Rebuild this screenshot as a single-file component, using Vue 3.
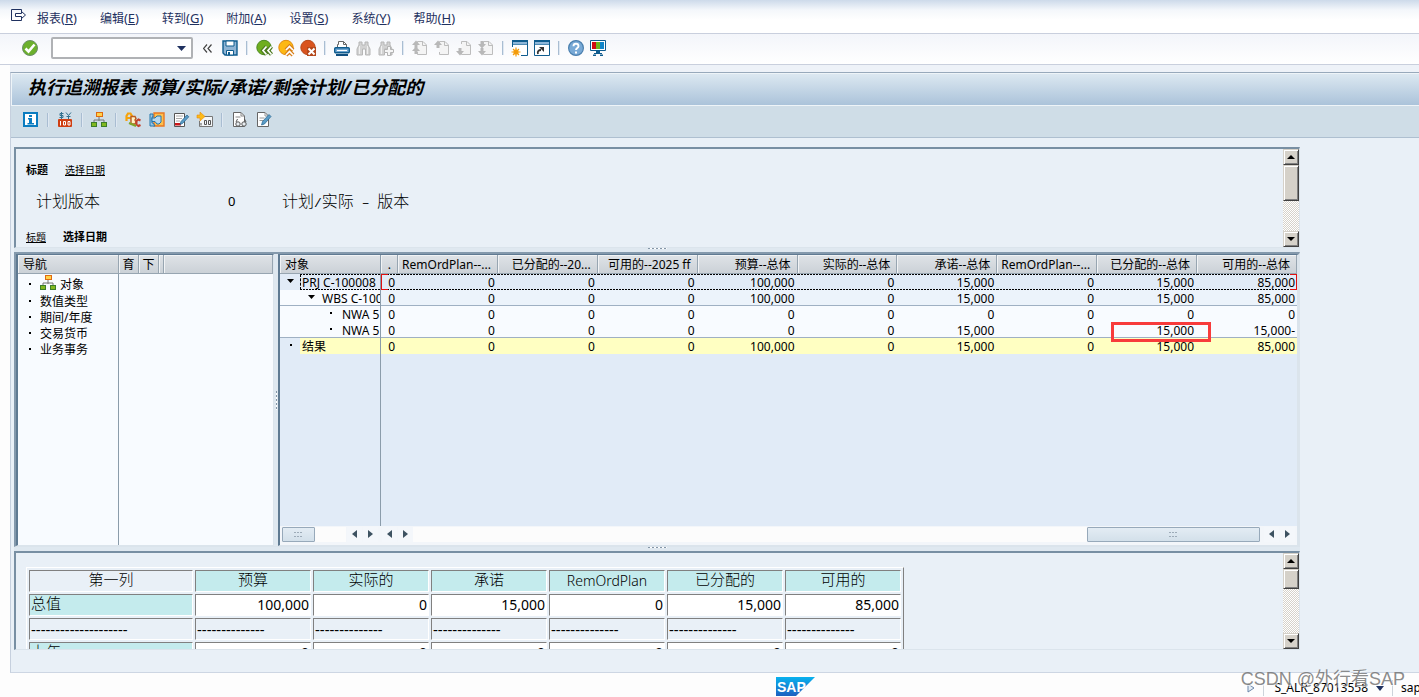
<script setup>
import { ref } from 'vue'

const menus = [
  ['报表', 'R'], ['编辑', 'E'], ['转到', 'G'], ['附加', 'A'],
  ['设置', 'S'], ['系统', 'Y'], ['帮助', 'H'],
]

const page = '<path d="M5.500 4V1.500H11L14.500 5V14.500H5.500V12" fill="#f4f4f4" stroke="#bdbdbd"/><path d="M10.500 1V5.500H15" fill="none" stroke="#bdbdbd"/>'
const binoculars = '<path d="M3 2h3v3h3V2h3v3l2 4v6H9.500V9h-3v6H1V9l2-4z" fill="#d2d2d2" stroke="#b6b6b6"/><path d="M3.500 6v8M11.500 6v8" stroke="#f0f0f0"/>'
const upArrow = '<path d="M4 0.500L8 5H5.500V8H2.500V5H0z" fill="#b8b8b8"/>'
const hierarchy = '<path d="M8 5v4M3 10V8h10v2" fill="none" stroke="#777"/><rect x="5.500" y=".5" width="6" height="4" fill="#ffd24a" stroke="#e06a10"/><rect x=".5" y="10.500" width="5" height="4" fill="#82b81f" stroke="#3c7d2a"/><rect x="10.500" y="10.500" width="5" height="4" fill="#82b81f" stroke="#3c7d2a"/>'

const icons = {
  ok: '<circle cx="8" cy="8" r="7.500" fill="#6cb02c" stroke="#6b8f68"/><path d="M3.500 8.500l3 3L12.500 4.500" fill="none" stroke="#fff" stroke-width="2.600"/>',
  save: '<path d="M1 1h14v14H3l-2-2z" fill="#8fb4d4" stroke="#0f5c8e" stroke-width="1.400"/><path d="M4 1h8v5H4z" fill="#fff" stroke="#0f5c8e"/><path d="M4.500 10.500h7V15h-7z" fill="#fff" stroke="#0f5c8e"/><path d="M6 12h2v3H6z" fill="#0f5c8e"/>',
  back: '<circle cx="8" cy="7.500" r="7.200" fill="#6fae1f" stroke="#4c8a22"/><path d="M10.500 6.500L7 10.500l3.500 4M15.500 6.500l-3.500 4 3.500 4" fill="none" stroke="#4d7a20" stroke-width="4"/><path d="M10.500 6.500L7 10.500l3.500 4M15.500 6.500l-3.500 4 3.500 4" fill="none" stroke="#fff" stroke-width="1.700"/>',
  exit: '<circle cx="8" cy="7.500" r="7.200" fill="#fdb813" stroke="#e08a10"/><path d="M8 10l3.500-3.500L15 10M8 15l3.500-3.500L15 15" fill="none" stroke="#d8801a" stroke-width="4"/><path d="M8 10l3.500-3.500L15 10M8 15l3.500-3.500L15 15" fill="none" stroke="#fff" stroke-width="1.700"/>',
  cancel: '<circle cx="8" cy="7.500" r="7.200" fill="#d9531e" stroke="#b6481a"/><path d="M7 7h9v9H7z" fill="#b4481b"/><path d="M8.500 8.500l6 6M14.500 8.500l-6 6" stroke="#fff" stroke-width="2"/>',
  print: '<path d="M3.500 8V4.500h1V1.500H9.500L12.500 4.500V8" fill="#fff" stroke="#666"/><path d="M9.500 1.500v3h3" fill="none" stroke="#666"/><rect x=".7" y="7.700" width="14.600" height="5" rx="1" fill="#6fa5d0" stroke="#0f5c8e" stroke-width="1.400"/><path d="M3 10.500h10" stroke="#fff"/><path d="M2 15h12" stroke="#0f4f80" stroke-width="2"/>',
  find: binoculars,
  findNext: binoculars + '<path d="M9.500 6.500h3v3h3v3h-3v3h-3v-3h-3v-3h3z" fill="#f5f5f5" stroke="#b4b4b4"/>',
  first: page + upArrow + '<path d="M4 6.500L8 11H5.500V14H2.500V11H0z" fill="#b8b8b8"/>',
  prev: page + upArrow,
  next: page + '<path d="M4 15.500L8 11H5.500V8H2.500v3H0z" fill="#b8b8b8"/>',
  last: page + '<path d="M4 8.500L8 4H5.500V1H2.500V4H0z" fill="#b8b8b8"/><path d="M4 15.500L8 11H5.500V8H2.500v3H0z" fill="#b8b8b8"/>',
  session: '<path d="M.5.500h15v15H.5z" fill="#fff" stroke="#0f5c8e"/><path d="M0 0h16v5H0z" fill="#0f5c8e"/><path d="M1 2h14v2.500H1z" fill="#8db6d8"/><path d="M0 7h9v9H0z" fill="#fff"/><circle cx="4" cy="12" r="2.600" fill="#fbb016"/><path d="M4 7.500v9M-.5 12h9M1 9l6 6M7 9l-6 6" stroke="#f39a0b" stroke-width="1.200"/>',
  shortcut: '<path d="M.5.500h15v15H.5z" fill="#fff" stroke="#0f5c8e"/><path d="M0 0h16v5H0z" fill="#0f5c8e"/><path d="M1 2h14v2.500H1z" fill="#8db6d8"/><path d="M4 14c-1-3 1-4 3-4" fill="none" stroke="#333" stroke-width="1.800"/><path d="M5 7h5v5z" fill="#333"/>',
  help: '<circle cx="8" cy="8" r="7.400" fill="#78a9d6" stroke="#4a7fae" stroke-width="1.200"/><path d="M5.500 6.200c0-3.200 5-3.200 5 0 0 1.800-2.500 1.800-2.500 3.800" fill="none" stroke="#fff" stroke-width="1.900"/><path d="M7 11.500h2v2H7z" fill="#fff"/>',
  monitor: '<path d="M.5.500h15v10H.5z" fill="#fff" stroke="#0f5c8e"/><path d="M2 2h4v7H2z" fill="#d20a11"/><path d="M6 2h4v7H6z" fill="#6db51d"/><path d="M10 2h4v7h-4z" fill="#1185c9"/><path d="M6 11h4v2H6zM4 13h8v1H4zM3 14.500h3v1.500H3zM10 14.500h3v1.500h-3z" fill="#0f5c8e"/>',
  info: '<path d="M1 1h13v13H1z" fill="#fff" stroke="#0a7cc0" stroke-width="2"/><path d="M6 3h3v2H6zM5 6h4v5h2v1.500H4.500V11H6V7.500H5z" fill="#0a7cc0"/>',
  currency: '<path d="M6.500 1.500H3v2h3v2H2.500M4.500 0v7M9 .5l2.500 3 2.500-3M11.500 3.500V7M9.500 4.500h4" fill="none" stroke="#33708f"/><rect x="1" y="7" width="14" height="8" rx="1" fill="#cf3f12"/><path d="M3.500 9v4.500M6.500 9.500h2v3.500h-2zM11 9.500h2v3.500h-2z" fill="none" stroke="#fff"/>',
  hierarchy,
  abc: '<path d="M1.500 9V4L3 1.500h2.500L7 4v5M1.500 6H7" fill="none" stroke="#f5a30c" stroke-width="2.200"/><path d="M6 4.500h4l1 2-1 1.500 1 2-1 2H6z" fill="#fff1c4" stroke="#b95a20" stroke-width="1.400"/><path d="M15.500 8.500l-2-1-2 1.500v3.500l2 1.500 2-1" fill="none" stroke="#c2402a" stroke-width="2"/><path d="M4 11l7 3" stroke="#81a527" stroke-width="2"/>',
  settings: '<path d="M5 1h10v13H5z" fill="#fdbf4c" stroke="#e87722" stroke-width="1.400"/><path d="M1 2h3v3H3v6h1l2 3H1z" fill="#9cc5e4" stroke="#2376ab"/><path d="M3 6h3l2-2h4v6l-2 2H8L6 9.500H3z" fill="#b9d8ed" stroke="#2376ab"/>',
  editList: '<path d="M1.500 1.500h10v13h-10z" fill="#fff" stroke="#555"/><path d="M3 4h7M3 6.500h6M3 9h4" stroke="#aaa"/><path d="M2 11h6v2.500H2z" fill="#cc1719"/><path d="M7 12.500l1-3 6-6.500 1.800 1.800L9.500 11.500z" fill="#5b9cc6" stroke="#21638f" stroke-width=".7"/>',
  decimals: '<path d="M7 4.500h8.500v10H2.500V9" fill="#f3f6f8" stroke="#777"/><path d="M4 11v2.500M7.500 8.500h2v4h-2zM11.500 8.500h2v4h-2z" fill="none" stroke="#555"/><path d="M0 3h3V0l5 4.500L3 9V6H0z" fill="#fdbb18" stroke="#e88b0e" stroke-width=".6"/>',
  display: '<path d="M2.500.5H10L13.500 4v10.500h-11z" fill="#fff" stroke="#666"/><path d="M10 .5V4h3.500M4.500 5h5" fill="none" stroke="#888"/><path d="M5 10l1.500-3M15 10l-1.500-3" stroke="#555"/><circle cx="7" cy="12" r="2.200" fill="#e8edf1" stroke="#555"/><circle cx="13" cy="12" r="2.200" fill="#e8edf1" stroke="#555"/>',
  change: '<path d="M2.500.5H10L13.500 4v10.500h-11z" fill="#fff" stroke="#666"/><path d="M10 .5V4h3.500M4.500 6h5M4.500 8.500h4" fill="none" stroke="#999"/><path d="M6.500 13l1-3.500L14 2.500l2 2-6.500 7.500z" fill="#5b9cc6" stroke="#21638f" stroke-width=".7"/>',
}

const mainTools = [
  ['save', '保存'], null, ['back', '返回'], ['exit', '退出'], ['cancel', '取消'], null,
  ['print', '打印'], ['find', '查找'], ['findNext', '查找下一个'], null,
  ['first', '第一页'], ['prev', '上一页'], ['next', '下一页'], ['last', '最后一页'], null,
  ['session', '新会话'], ['shortcut', '快捷方式'], null, ['help', '帮助'], ['monitor', '布局'],
]
const appTools = [
  ['info', '信息'], null, ['currency', '货币'], null, ['hierarchy', '层次'], null,
  ['abc', '文本'], ['settings', '设置'], ['editList', '编辑列表'], ['decimals', '小数位'], null,
  ['display', '显示'], ['change', '更改'],
]

const navItems = ['数值类型', '期间/年度', '交易货币', '业务事务']

const headers = [
  '.', 'RemOrdPlan--...', '已分配的--20...', '可用的--2025 ff', '预算--总体', '实际的--总体',
  '承诺--总体', 'RemOrdPlan--...', '已分配的--总体', '可用的--总体',
]
const rows = [
  { kind: 'active', level: 0, open: true, name: 'PRJ C-100008', v: ['0', '0', '0', '0', '100,000', '0', '15,000', '0', '15,000', '85,000'] },
  { kind: 'sub', level: 1, open: true, name: 'WBS C-100', v: ['0', '0', '0', '0', '100,000', '0', '15,000', '0', '15,000', '85,000'] },
  { kind: 'leaf', level: 2, name: 'NWA 5', v: ['0', '0', '0', '0', '0', '0', '0', '0', '0', '0'] },
  { kind: 'leaf last', level: 2, name: 'NWA 5', mark: 8, v: ['0', '0', '0', '0', '0', '0', '15,000', '0', '15,000', '15,000-'] },
  { kind: 'total', level: 0, name: '结果', v: ['0', '0', '0', '0', '100,000', '0', '15,000', '0', '15,000', '85,000'] },
]

const sumHeads = ['预算', '实际的', '承诺', 'RemOrdPlan', '已分配的', '可用的']
const totals = ['100,000', '0', '15,000', '0', '15,000', '85,000']
const command = ref('')
</script>

<template>
  <div class="window">
    <nav class="menubar">
      <button class="sysmenu" aria-label="系统菜单">
        <svg width="16" height="14" viewBox="0 0 16 14"><path d="M10.500 3V.5H.5v11h10V9" fill="none" stroke="#1f3160" /><path d="M4.500 4.500h6V2.500L14.500 6l-4 3.500V7.500h-6z" fill="#fff" stroke="#1f3160" /></svg>
      </button>
      <button v-for="m in menus" :key="m[1]" class="menu">{{ m[0] }}<span>(<u>{{ m[1] }}</u>)</span></button>
    </nav>

    <div class="toolbar">
      <button class="tool" aria-label="回车"><svg width="16" height="16" viewBox="0 0 16 16" v-html="icons.ok" /></button>
      <div class="command">
        <input v-model="command" aria-label="命令" />
        <button aria-label="历史"><svg width="9" height="5" viewBox="0 0 9 5"><path d="M0 0h9L4.500 5z" fill="#1f3160" /></svg></button>
      </div>
      <button class="collapse" aria-label="收起"><svg width="9" height="9" viewBox="0 0 9 9"><path d="M4 .5l-3.500 4 3.500 4M8.500.5L5 4.500l3.500 4" fill="none" stroke="#444" stroke-width="1.200" /></svg></button>
      <template v-for="(t, i) in mainTools" :key="i">
        <button v-if="t" class="tool" :aria-label="t[1]"><svg width="16" height="16" viewBox="0 0 16 16" v-html="icons[t[0]]" /></button>
        <i v-else class="sep roomy" />
      </template>
    </div>

    <main class="frame">
      <h1>执行追溯报表 预算/实际/承诺/剩余计划/已分配的</h1>
      <div class="apptools">
        <template v-for="(t, i) in appTools" :key="i">
          <button v-if="t" class="tool" :aria-label="t[1]"><svg width="16" height="16" viewBox="0 0 16 16" v-html="icons[t[0]]" /></button>
          <i v-else class="sep" />
        </template>
      </div>

      <div class="workspace">
        <section class="pane head-pane">
          <div class="scroll">
            <p class="links"><b>标题</b><a href="#date">选择日期</a></p>
            <p class="version"><span class="v-name">计划版本</span><span class="v-num">0</span><span>计划<span class="mono">/</span>实际<span class="mono">&nbsp;–&nbsp;</span>版本</span></p>
            <p class="links"><a href="#title">标题</a><b>选择日期</b></p>
          </div>
          <div class="vbar">
            <button aria-label="向上"><svg width="8" height="4" viewBox="0 0 8 4"><path d="M0 4h8L4 0z" /></svg></button>
            <span class="vthumb tall" />
            <button class="end" aria-label="向下"><svg width="8" height="4" viewBox="0 0 8 4"><path d="M0 0h8L4 4z" /></svg></button>
          </div>
        </section>

        <div class="hsplit"><i /></div>

        <section class="middle">
          <div class="navpane">
            <div class="navhead"><span class="c-nav">导航</span><span class="c-btn">育</span><span class="c-btn">下</span><span class="c-gap" /><span class="c-rest" /></div>
            <ul>
              <li class="with-icon"><i class="dot" /><svg width="16" height="16" viewBox="0 0 16 16" v-html="icons.hierarchy" />对象</li>
              <li v-for="n in navItems" :key="n"><i class="dot" />{{ n }}</li>
            </ul>
          </div>
          <div class="vsplit"><i /></div>
          <div class="datapane">
            <div class="gridwrap">
              <table class="grid">
                <colgroup><col class="w-name" /><col class="w-tiny" /><col v-for="n in 9" :key="n" /></colgroup>
                <thead>
                  <tr><th class="name">对象</th><th v-for="(h, i) in headers" :key="i">{{ h }}</th></tr>
                </thead>
                <tbody>
                  <tr v-for="(r, i) in rows" :key="i" :class="r.kind">
                    <td class="name"><div class="tree" :class="'l' + r.level">
                      <span class="knob"><svg v-if="r.open" width="7" height="4" viewBox="0 0 7 4"><path d="M0 0h7L3.500 4z" /></svg><i v-else class="dot" /></span><span class="label">{{ r.name }}</span>
                    </div></td>
                    <td v-for="(v, j) in r.v" :key="j">{{ v }}<i v-if="r.mark === j" class="mark" /></td>
                  </tr>
                </tbody>
              </table>
            </div>
            <div class="hbars">
              <div class="hbar first"><span class="hthumb small"><i class="grip" /></span><span class="space" />
                <button aria-label="左"><svg width="5" height="8" viewBox="0 0 5 8"><path d="M5 0v8L0 4z" /></svg></button><button aria-label="右"><svg width="5" height="8" viewBox="0 0 5 8"><path d="M0 0v8l5-4z" /></svg></button>
              </div>
              <div class="hbar rest">
                <button aria-label="左"><svg width="5" height="8" viewBox="0 0 5 8"><path d="M5 0v8L0 4z" /></svg></button><button aria-label="右"><svg width="5" height="8" viewBox="0 0 5 8"><path d="M0 0v8l5-4z" /></svg></button>
                <span class="space" /><span class="hthumb wide"><i class="grip" /></span>
                <button class="gapped" aria-label="左"><svg width="5" height="8" viewBox="0 0 5 8"><path d="M5 0v8L0 4z" /></svg></button><button aria-label="右"><svg width="5" height="8" viewBox="0 0 5 8"><path d="M0 0v8l5-4z" /></svg></button>
              </div>
            </div>
          </div>
        </section>

        <div class="hsplit"><i /></div>

        <section class="pane sum-pane">
          <div class="scroll">
            <table class="sum">
              <tbody>
                <tr><th class="plain first">第一列</th><th v-for="h in sumHeads" :key="h" :class="{ latin: h === 'RemOrdPlan' }">{{ h }}</th></tr>
                <tr><th class="left">总值</th><td v-for="(t, i) in totals" :key="i">{{ t }}</td></tr>
                <tr class="rule"><td>--------------------</td><td v-for="n in 6" :key="n">--------------</td></tr>
                <tr><th class="left">上年</th><td v-for="n in 6" :key="n">0</td></tr>
              </tbody>
            </table>
          </div>
          <div class="vbar">
            <button aria-label="向上"><svg width="8" height="4" viewBox="0 0 8 4"><path d="M0 4h8L4 0z" /></svg></button>
            <span class="vthumb" />
            <button class="end" aria-label="向下"><svg width="8" height="4" viewBox="0 0 8 4"><path d="M0 0h8L4 4z" /></svg></button>
          </div>
        </section>
      </div>
    </main>

    <footer class="status">
      <svg class="logo" width="40" height="20" viewBox="0 0 40 20">
        <defs><linearGradient id="sap" x2="0" y2="1"><stop stop-color="#09b2ee" /><stop offset="1" stop-color="#1d60c0" /></linearGradient></defs>
        <path d="M0 0h39L20 19H0z" fill="url(#sap)" />
        <text x="1" y="15" font-size="14" font-weight="700" fill="#fff" font-family="Liberation Sans, sans-serif">SAP</text>
      </svg>
      <div class="state">
        <svg width="8" height="10" viewBox="0 0 8 10"><path d="M1 1l6 4-6 4z" fill="#e6eef6" stroke="#6b87ab" /></svg>
        <i class="tick" />
        <span class="tcode">S_ALR_87013558</span>
        <svg width="8" height="5" viewBox="0 0 8 5"><path d="M0 0h8L4 5z" fill="#1f3160" /></svg>
        <i class="tick" />
        <span class="client">sap</span>
      </div>
      <span class="watermark">CSDN @外行看SAP</span>
    </footer>
  </div>
</template>

<style>
body { overflow: hidden; }
</style>

<style scoped>
* { box-sizing: border-box; }
.window {
  position: relative;
  display: flex;
  flex-direction: column;
  height: 100vh;
  overflow: hidden;
  background: #fdfdfd;
  color: #000;
  font: 12px/16px "Noto Sans", "Noto Sans CJK SC", sans-serif;
  white-space: nowrap;
}
button { display: flex; align-items: center; justify-content: center; margin: 0; padding: 0; border: 0; background: none; color: inherit; font: inherit; flex: none; }
svg { display: block; flex: none; }
p, h1, ul { margin: 0; padding: 0; }
a { color: inherit; }

.menubar { display: flex; align-items: center; gap: 23px; height: 34px; padding: 4px 0 0 11px; flex: none; background: linear-gradient(#cddaea, #f4f7fb 10px, #fff 20px); border-bottom: 1px solid #c9cfdd; color: #1f3160; }
.sysmenu { width: 16px; height: 14px; margin: -5px -13px 0 0; }
.menu { align-items: baseline; }
.menu span { font-size: 13px; }

.toolbar { display: flex; align-items: center; gap: 6px; height: 31px; padding: 0 22px 2px; flex: none; background: linear-gradient(#f3f5fa, #fff); border-bottom: 1px solid #c9cfdd; }
.tool { width: 16px; height: 16px; }
.tool svg { overflow: visible; }
.command { display: flex; width: 142px; height: 22px; margin-left: 7px; border: 2px solid #b0b2b5; border-radius: 2px; background: #fff; }
.command input { flex: 1; min-width: 0; padding: 0 3px; border: 0; outline: 0; background: none; font: inherit; }
.command button { width: 20px; }
.collapse { width: 9px; margin: 0 4px; }
.sep { width: 2px; height: 14px; background: linear-gradient(90deg, #a9bdd2 50%, #dfe8f2 50%); }
.sep.roomy { margin: 0 2px; }

.frame { display: flex; flex-direction: column; flex: 1; min-height: 0; margin: 7px 0 0 10px; border-left: 1px solid #c6d0de; border-top: 1px solid #98a9bb; border-bottom: 1px solid #cdd6e3; background: #e9f0f7; box-shadow: 0 -7px #eef2f8; }
h1 { height: 32px; padding-left: 16px; flex: none; background: linear-gradient(#dce8f1, #abc3da); border-top: 1px solid #eef4f8; border-left: 1px solid #eef4f8; font: italic 700 18px/26px "Noto Sans", "Noto Sans CJK SC", sans-serif; }
.apptools { display: flex; align-items: center; gap: 8px; height: 33px; padding: 0 12px 4px; flex: none; background: #cfdde7; border-top: 1px solid #eef4f8; border-bottom: 1px solid #aebfd0; }

.workspace { display: flex; flex-direction: column; flex: 1; min-height: 0; padding: 9px 119px 22px 3px; }
.pane { display: flex; flex: none; border: solid; border-width: 2px 1px 1px 2px; border-color: #788fa3 #dbe4ec #dbe4ec #788fa3; }
.scroll { flex: 1; min-width: 0; overflow: hidden; }
.head-pane { height: 101px; }
.links { display: flex; gap: 17px; padding-left: 10px; font-size: 10px; line-height: 16px; }
.links b { font-size: 11px; }
.head-pane .links:first-child { padding-top: 13px; }
.version { display: flex; margin: 11px 0 16px; padding-left: 20px; font-size: 16px; line-height: 24px; font-weight: 300; }
.v-name { width: 192px; }
.v-num { width: 54px; font-size: 13px; font-weight: 400; }
.mono { font: 13px "Liberation Mono", monospace; }

.vbar { display: flex; flex-direction: column; width: 16px; flex: none; background: repeating-conic-gradient(#d6d2ca 0 25%, #fff 0 50%) 0 0 / 2px 2px; }
.vbar button, .vthumb { width: 16px; height: 16px; background: #d5d1c9; border: 1px solid; border-color: #d5d1c9 #404040 #404040 #d5d1c9; box-shadow: inset 1px 1px #fff, inset -1px -1px #808080; }
.vthumb { height: 20px; flex: none; }
.vthumb.tall { height: 36px; }
.vbar .end { margin-top: auto; }

.hsplit { display: flex; justify-content: center; align-items: flex-start; height: 4px; flex: none; background: #dfe8f0; }
.hsplit i { width: 19px; height: 1px; background: repeating-linear-gradient(90deg, #8496a7 0 2px, #fff 2px 4px); }

.middle { display: flex; flex: 1; min-height: 0; border: solid; border-width: 2px 1px 1px 2px; border-color: #8499ac #dbe4ec #dbe4ec #8499ac; }
.navpane { width: 258px; flex: none; border: solid; border-width: 1px 1px 1px 2px; border-color: #5f7a92 #dbe4ec #dbe4ec #5f7a92; background: linear-gradient(#8b9cab, #8b9cab) 100px 0 / 1px 100% no-repeat #f8fbff; }
.navhead { display: flex; height: 19px; border-bottom: 1px solid #97a5b1; line-height: 20px; }
.navhead span { background: linear-gradient(#dfe3e7, #cbd1d7); border-right: 1px solid #97a5b1; box-shadow: inset 1px 1px #f1f3f5; text-align: center; overflow: hidden; }
.navhead .c-nav { width: 101px; padding-left: 5px; text-align: left; }
.navhead .c-btn { width: 20px; }
.navhead .c-gap { width: 5px; }
.navhead .c-rest { flex: 1; }
ul { padding-top: 1px; list-style: none; }
li { display: flex; align-items: center; height: 16px; padding-left: 11px; }
li .dot { margin: 0 9px 2px 0; }
li.with-icon { height: 19px; }
li.with-icon svg { margin: 0 4px 4px 0; }
.dot { width: 2px; height: 2px; background: #000; flex: none; }
.vsplit { display: flex; align-items: center; justify-content: center; width: 4px; flex: none; background: #dfe8f0; }
.vsplit i { width: 1px; height: 19px; background: repeating-linear-gradient(#8496a7 0 2px, #fff 2px 4px); }

.datapane { display: flex; flex-direction: column; flex: 1; min-width: 0; border: solid; border-width: 1px 2px 1px 2px; border-color: #5f7a92 #dbe4ec #dbe4ec #5f7a92; }
.gridwrap { flex: 1; min-height: 0; overflow: hidden; background: linear-gradient(#8b9cab, #8b9cab) 100px 0 / 1px 100% no-repeat #e1ebf7; }
.grid { width: 100%; table-layout: fixed; border-collapse: separate; border-spacing: 0; }
.w-name { width: 101px; }
.w-tiny { width: 17px; }
.grid th { height: 19px; padding: 1px 6px 0 0; font-weight: 400; text-align: right; line-height: 17px; background: linear-gradient(#dfe3e7, #cbd1d7); border-right: 1px solid #97a5b1; border-bottom: 1px solid #97a5b1; box-shadow: inset 1px 1px #f1f3f5; }
.grid th.name { padding-left: 5px; text-align: left; }
.grid td { position: relative; height: 16px; padding: 2px 3px 0 0; line-height: 14px; text-align: right; }
.grid td:last-child { padding-right: 2px; }
.grid .name { border-right: 1px solid #8b9cab; }
.grid td.name { padding: 0; text-align: left; }
.tree { display: flex; align-items: center; height: 16px; overflow: hidden; }
.l1 { padding-left: 20px; }
.l2 { padding-left: 40px; }
.knob { display: flex; justify-content: center; width: 22px; padding-bottom: 2px; flex: none; }
.label { height: 16px; padding-top: 2px; }
.sub td { background: #ecf3fb; box-shadow: inset 0 -1px #9fb0c3; }
.sub td:first-child, .leaf td { background: #f8fbff; }
.last td { box-shadow: inset 0 -1px #9fb0c3; }
.total td { background: #ffffc2; }
.total td.name { background: linear-gradient(90deg, #e1ebf7 20px, #ffffc2 20px); }
.active td { background: repeating-linear-gradient(90deg, #000 0 2px, transparent 2px 3px) 0 0 / 100% 1px no-repeat, repeating-linear-gradient(90deg, #000 0 2px, transparent 2px 3px) 0 100% / 100% 1px no-repeat #e1ebf7; }
.active td.name { background-position: 20px 0, 20px 100%; }
.active .knob { width: 20px; }
.active .label { padding-left: 1px; border-left: 1px dashed #000; }
.active td:nth-child(2)::before, .active td:last-child::after { content: ""; position: absolute; z-index: 1; top: 0; bottom: 0; width: 6px; border: 1px solid #e01010; }
.active td:nth-child(2)::before { left: 0; border-right: 0; }
.active td:last-child::after { right: 0; border-left: 0; }
.mark { position: absolute; z-index: 2; left: 14px; top: 0; width: 100px; height: 20px; border: 3px solid #f83b3b; }

.hbars { display: flex; height: 19px; flex: none; background: #f3f6fa; }
.hbar { display: flex; align-items: center; height: 16px; }
.hbar.first { width: 101px; padding: 0 3px 0 2px; flex: none; }
.hbar.rest { flex: 1; padding-right: 2px; }
.hbar button { width: 15px; height: 15px; margin-left: 1px; background: #f4f7fb; }
.hbar button.gapped { margin-left: 4px; }
.hbar svg path { fill: #3d5261; }
.space { flex: 1; height: 15px; background: #fcfcfc; }
.hthumb { display: flex; align-items: center; justify-content: center; width: 173px; height: 15px; border: 1px solid #97a9ba; border-radius: 1px; background: linear-gradient(#e3ecf4, #d3e0ea); }
.hthumb.small { width: 33px; }
.grip { width: 9px; height: 5px; background: repeating-linear-gradient(90deg, #9dabb8 0 2px, transparent 2px 3px) 0 0 / 100% 1px no-repeat, repeating-linear-gradient(90deg, #9dabb8 0 2px, transparent 2px 3px) 0 4px / 100% 1px no-repeat; }

.sum-pane { height: 99px; }
.sum { margin: 14px 0 0 10px; border: 1px solid; border-color: #fff #808080 #808080 #fff; border-collapse: separate; border-spacing: 2px; }
.sum th, .sum td { width: 116px; height: 22px; padding: 0 1px; border: 1px solid; border-color: #808080 #fff #fff #808080; line-height: 20px; }
.sum th { background: #c4ebed; font-size: 15px; line-height: 16px; font-weight: 300; vertical-align: top; }
.sum th.latin { font-size: 14px; line-height: 20px; }
.sum th.plain { background: none; }
.sum th.first { width: 164px; }
.sum th.left { text-align: left; }
.sum td { background: #fff; font-size: 14px; text-align: right; }
.sum .rule td { background: none; font-size: 15px; text-align: left; }

.status { display: flex; align-items: flex-end; height: 24px; flex: none; position: relative; }
.logo { margin: 0 auto 0 776px; }
.state { display: flex; align-items: center; height: 18px; gap: 8px; }
.tick { width: 1px; height: 16px; background: #ccd3da; }
.tcode { margin-left: 2px; }
.client { width: 18px; }
.watermark { position: absolute; right: 14px; bottom: 6px; font: 18px/24px "Liberation Sans", "Noto Sans CJK SC", sans-serif; color: rgba(110, 110, 110, .8); text-shadow: 1px 1px rgba(255, 255, 255, .7); }
</style>
